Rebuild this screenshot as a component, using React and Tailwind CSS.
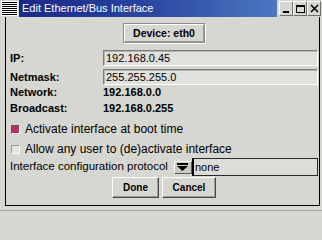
import React from "react";

function MenuIcon() {
  return (
    <div className="w-[19px] h-[17px] bg-[#d6d7d1] flex items-center justify-center">
      <svg width="17" height="15" viewBox="0 0 17 15">
        <rect x="0" y="0" width="17" height="15" fill="#ffffff" />
        {[1, 3, 5, 7, 9, 11, 13].map((y) => (
          <rect key={y} x="1" y={y} width="15" height="1" fill="#000000" />
        ))}
      </svg>
    </div>
  );
}

function WinButton({ children }) {
  return (
    <div className="w-[14px] h-[15px] bg-[#d6d7d1] border border-t-white border-l-white border-b-[#6f6f6f] border-r-[#6f6f6f] flex items-center justify-center">
      {children}
    </div>
  );
}

function Label({ children }) {
  return (
    <div className="w-[93px] shrink-0 text-[11px] font-bold leading-none text-black">
      {children}
    </div>
  );
}

function Input({ value }) {
  return (
    <div className="flex-1 h-[16px] bg-[#e0e1dc] border border-t-[#7c7c7c] border-l-[#7c7c7c] border-b-white border-r-white shadow-[inset_1px_1px_0_#b4b4b0] flex items-center pl-[2px] text-[11px] leading-none text-black overflow-hidden whitespace-nowrap">
      {value}
    </div>
  );
}

function RaisedButton({ children, className }) {
  return (
    <div
      className={
        "bg-[#d6d7d1] border border-t-white border-l-white border-b-[#4a4a4a] border-r-[#4a4a4a] shadow-[inset_-1px_-1px_0_#9a9a96] flex items-center justify-center text-[10px] font-bold leading-none text-black shrink-0 " +
        className
      }
    >
      {children}
    </div>
  );
}

export default function App() {
  return (
    <div className="min-h-screen w-[322px] bg-[#d6d7d1]">
      <div className="w-[322px] h-[211px] bg-[#d6d7d1] flex flex-col font-['Liberation_Sans',Arial,sans-serif] overflow-hidden border-b border-b-[#a4a5a0]">
        {/* Title bar */}
        <div className="h-[17px] flex shrink-0">
          <MenuIcon />
          <div className="flex-1 bg-linear-to-r from-[#1a2788] via-[#2a46a0] to-[#4d78bf] flex items-center pl-[3px] text-[11px] text-white leading-none">
            Edit Ethernet/Bus Interface
          </div>
          <div className="flex items-start pt-[1px] pl-[2px] pr-[1px] bg-[#d6d7d1]">
            <WinButton>
              <div className="w-[6px] h-[2px] bg-black mt-[7px]" />
            </WinButton>
            <WinButton>
              <div className="w-[9px] h-[8px] border border-black border-t-2" />
            </WinButton>
            <WinButton>
              <svg width="9" height="9" viewBox="0 0 9 9">
                <path d="M1 1 L8 8 M8 1 L1 8" stroke="#000" strokeWidth="1.5" />
              </svg>
            </WinButton>
          </div>
        </div>

        {/* Body with frame */}
        <div className="h-[193px] shrink-0 pl-[5px] pr-[2px] pb-[4px] flex flex-col">
          <div className="h-[189px] shrink-0 border-l border-r border-b border-black flex flex-col pl-[4px] pr-[1px] pt-[6px]">
            <div className="flex justify-center shrink-0">
              <div className="w-[82px] h-[20px] border border-[#8c8c8c] shadow-[1px_1px_0_#ffffff,inset_1px_1px_0_#ffffff,inset_-1px_-1px_0_#9a9a96] flex items-center justify-center text-[10.5px] font-bold leading-none">
                Device: eth0
              </div>
            </div>

            <div className="flex items-center h-[16px] mt-[7px] shrink-0">
              <Label>IP:</Label>
              <Input value="192.168.0.45" />
            </div>
            <div className="flex items-center h-[16px] mt-[3px] shrink-0">
              <Label>Netmask:</Label>
              <Input value="255.255.255.0" />
            </div>
            <div className="flex items-center h-[15px] shrink-0">
              <Label>Network:</Label>
              <div className="text-[11px] font-bold leading-none">192.168.0.0</div>
            </div>
            <div className="flex items-center h-[16px] shrink-0">
              <Label>Broadcast:</Label>
              <div className="text-[11px] font-bold leading-none">192.168.0.255</div>
            </div>

            <div className="flex items-center h-[16px] mt-[5px] pl-[1px] shrink-0">
              <div className="w-[9px] h-[9px] bg-[#b3306a] border border-t-[#5a5a5a] border-l-[#5a5a5a] border-b-white border-r-white" />
              <div className="ml-[5px] text-[12px] leading-none">Activate interface at boot time</div>
            </div>
            <div className="flex items-center h-[16px] mt-[4px] pl-[1px] shrink-0">
              <div className="w-[9px] h-[9px] bg-[#e4e5e0] border border-t-[#9a9a96] border-l-[#9a9a96] border-b-white border-r-white" />
              <div className="ml-[5px] text-[12px] leading-none">Allow any user to (de)activate interface</div>
            </div>

            <div className="flex items-center h-[18px] mt-[1px] shrink-0">
              <div className="text-[11.5px] leading-none whitespace-nowrap">Interface configuration protocol</div>
              <div className="ml-[6px] w-[18px] h-[13px] bg-[#c9cac5] border border-t-white border-l-white border-b-[#5a5a5a] border-r-[#5a5a5a] flex items-center justify-center">
                <svg width="11" height="8" viewBox="0 0 11 8">
                  <rect x="0" y="0" width="11" height="2" fill="#000" />
                  <path d="M0 3 L11 3 L5.5 8 Z" fill="#000" />
                </svg>
              </div>
              <div className="flex-1 h-[18px] bg-[#dcddd8] border border-[#2a2a2a] border-l-2 border-l-black flex items-center pl-[1px] text-[11px] leading-none">
                none
              </div>
            </div>

            <div className="flex justify-center gap-[3px] mt-[1px] shrink-0">
              <RaisedButton className="w-[47px] h-[21px]">Done</RaisedButton>
              <RaisedButton className="w-[54px] h-[21px]">Cancel</RaisedButton>
            </div>
          </div>
        </div>
      </div>
    </div>
  );
}
